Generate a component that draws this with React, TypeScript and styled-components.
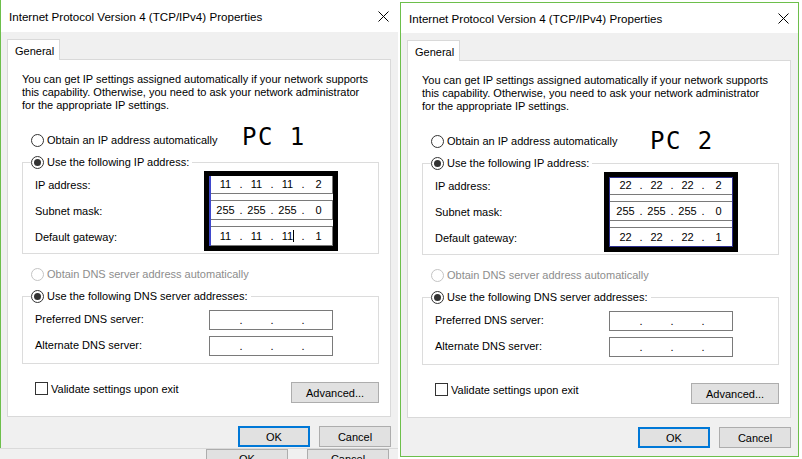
import React from 'react'
import styled, { createGlobalStyle, css } from 'styled-components'

type Ip = [string, string, string, string]

interface DialogProps {
  framed?: boolean
  height: number
  titleHeight: number
  pc: string
  pcShift: { x: number; y: number }
  ip: Ip
  mask: Ip
  gateway: Ip
  caretOnGateway?: number
  edge: 'left' | 'all'
}

const GlobalStyle = createGlobalStyle`
  html, body {
    margin: 0;
    padding: 0;
    background: #fff;
  }
  body {
    font-family: "Liberation Sans", Arial, sans-serif;
    font-size: 11px;
    color: #000;
  }
`

const Screen = styled.div`
  display: flex;
  align-items: flex-start;
  gap: 2px;
  width: 802px;
  height: 459px;
  overflow: hidden;
  background: #fff;
`
const LeftColumn = styled.div`
  display: flex;
  flex-direction: column;
  width: 398px;
`
const Window = styled.div<{ $framed?: boolean; $height: number }>`
  box-sizing: border-box;
  display: flex;
  flex-direction: column;
  width: ${({ $framed }) => ($framed ? 399 : 398)}px;
  height: ${({ $height }) => $height}px;
  margin-top: ${({ $framed }) => ($framed ? 2 : 0)}px;
  background: #f0f0f0;
  border: 1px solid #6dbf4b;
  ${({ $framed }) =>
    !$framed &&
    css`
      border-width: 0 0 0 1px;
    `}
`
const TitleBar = styled.div<{ $height: number }>`
  display: flex;
  align-items: center;
  height: ${({ $height }) => $height}px;
  padding: 0 9px 0 8px;
  background: #fff;
  font-size: 11.6px;
`
const CloseIcon = styled.svg`
  margin-left: auto;
  width: 11px;
  height: 11px;
`
const Body = styled.div`
  flex: 1;
  display: flex;
  flex-direction: column;
  padding: 7px 7px 0 6px;
`
const Tab = styled.div`
  position: relative;
  z-index: 1;
  align-self: flex-start;
  box-sizing: border-box;
  width: 53px;
  height: 21px;
  margin-bottom: -1px;
  padding: 3px 0 0 7px;
  background: #fff;
  border: 1px solid #d9d9d9;
  border-bottom: none;
  line-height: 16px;
`
const Panel = styled.div`
  display: flex;
  flex-direction: column;
  padding: 13px 11px 13px 14px;
  background: #fff;
  border: 1px solid #d9d9d9;
`
const Description = styled.p`
  margin: 0;
  line-height: 13px;
`
const RadioRow = styled.div<{ $disabled?: boolean; $top?: number }>`
  position: relative;
  display: flex;
  align-items: center;
  gap: 3px;
  height: 16px;
  padding-left: 9px;
  margin-top: ${({ $top }) => $top ?? 0}px;
  line-height: 16px;
  color: ${({ $disabled }) => ($disabled ? '#8d8d8d' : '#000')};
`
const Legend = styled(RadioRow)`
  align-self: flex-start;
  margin: -9px 0 0 8px;
  padding: 0 3px 0 0;
  background: #fff;
`
const Radio = styled.span<{ $checked?: boolean; $disabled?: boolean }>`
  box-sizing: border-box;
  display: flex;
  align-items: center;
  justify-content: center;
  width: 13px;
  height: 13px;
  border-radius: 50%;
  border: 1px solid ${({ $disabled }) => ($disabled ? '#c4c4c4' : '#333')};
  background: #fff;
  &::after {
    content: '';
    display: ${({ $checked }) => ($checked ? 'block' : 'none')};
    width: 7px;
    height: 7px;
    border-radius: 50%;
    background: #333;
  }
`
const PcTag = styled.span`
  position: absolute;
  font-family: "DejaVu Sans Mono", "Liberation Mono", monospace;
  font-size: 24px;
  line-height: 24px;
  letter-spacing: 1.5px;
  color: #000;
  white-space: pre;
`
const Group = styled.div`
  display: flex;
  flex-direction: column;
  margin-top: 14px;
  border: 1px solid #dcdcdc;
`
const GroupBody = styled.div`
  display: flex;
  margin-top: 1px;
  padding: 0 0 2px 12px;
`
const LabelColumn = styled.div`
  display: flex;
  flex-direction: column;
  width: 169px;
  padding-top: 1px;
`
const FieldLabel = styled.div`
  height: 26px;
  line-height: 26px;
`
const FieldStack = styled.div<{ $boxed?: boolean; $edge?: 'left' | 'all' }>`
  position: relative;
  display: flex;
  flex-direction: column;
  gap: 6px;
  width: 124px;
  overflow: hidden;
  background: #fff;
  border: 5px solid ${({ $boxed }) => ($boxed ? '#000' : 'transparent')};
  ${({ $boxed }) =>
    !$boxed &&
    css`
      background: transparent;
    `}
  ${({ $boxed }) =>
    $boxed &&
    css`
      & > div:first-child {
        margin-top: -2px;
      }
    `}
  ${({ $boxed, $edge }) =>
    $boxed &&
    $edge === 'left' &&
    css`
      &::after {
        content: '';
        position: absolute;
        left: 0;
        top: 0;
        bottom: 0;
        width: 2px;
        background: #3f47cc;
      }
    `}
  ${({ $boxed, $edge }) =>
    $boxed &&
    $edge === 'all' &&
    css`
      &::after {
        content: '';
        position: absolute;
        inset: 0;
        border: 1px solid #2e2f8f;
      }
    `}
`
const IpBox = styled.div`
  box-sizing: border-box;
  display: flex;
  height: 20px;
  padding-left: 4px;
  background: #fff;
  border: 1px solid #7a7a7a;
  line-height: 18px;
`
const Segment = styled.span`
  width: 23px;
  text-align: center;
  white-space: nowrap;
`
const Dot = styled.span`
  width: 8px;
  text-align: center;
`
const Caret = styled.span`
  display: inline-block;
  width: 1px;
  height: 12px;
  margin-right: -1px;
  vertical-align: -2px;
  background: #000;
`
const OptionsRow = styled.div`
  display: flex;
  align-items: flex-start;
  justify-content: space-between;
  margin-top: 18px;
  padding-left: 13px;
`
const CheckRow = styled.label`
  display: flex;
  align-items: center;
  gap: 3px;
  height: 13px;
`
const CheckBox = styled.span`
  box-sizing: border-box;
  width: 13px;
  height: 13px;
  border: 1px solid #333;
  background: #fff;
`
const Button = styled.div<{ $default?: boolean; $width: number }>`
  box-sizing: border-box;
  display: flex;
  align-items: center;
  justify-content: center;
  width: ${({ $width }) => $width}px;
  height: 21px;
  background: #e1e1e1;
  border: ${({ $default }) => ($default ? '2px solid #0078d7' : '1px solid #adadad')};
`
const Footer = styled.div`
  display: flex;
  justify-content: flex-end;
  gap: 9px;
  margin-top: 9px;
`
const BehindStrip = styled.div`
  display: flex;
  align-items: flex-start;
  height: 11px;
  padding-left: 206px;
  background: #f0f0f0;
  border-top: 1px solid #dadada;
  overflow: hidden;
`
const BehindButton = styled.div<{ $gap: number }>`
  box-sizing: border-box;
  width: 82px;
  height: 21px;
  margin-left: ${({ $gap }) => $gap}px;
  padding-top: 3px;
  text-align: center;
  background: #e1e1e1;
  border: 1px solid #adadad;
`

const IpField = ({ value, caretAt }: { value: Ip; caretAt?: number }) => (
  <IpBox>
    {value.map((seg, i) => (
      <React.Fragment key={i}>
        {i > 0 && <Dot>.</Dot>}
        <Segment>
          {seg}
          {caretAt === i && <Caret />}
        </Segment>
      </React.Fragment>
    ))}
  </IpBox>
)

const empty: Ip = ['', '', '', '']

const Dialog = (p: DialogProps) => (
  <Window $framed={p.framed} $height={p.height}>
    <TitleBar $height={p.titleHeight}>
      Internet Protocol Version 4 (TCP/IPv4) Properties
      <CloseIcon viewBox="0 0 11 11">
        <path d="M0.5 0.5 L10.5 10.5 M10.5 0.5 L0.5 10.5" stroke="#000" strokeWidth="1" />
      </CloseIcon>
    </TitleBar>
    <Body>
      <Tab>General</Tab>
      <Panel>
        <Description>
          You can get IP settings assigned automatically if your network supports
          <br />
          this capability. Otherwise, you need to ask your network administrator
          <br />
          for the appropriate IP settings.
        </Description>
        <RadioRow $top={20}>
          <Radio />
          Obtain an IP address automatically
          <PcTag style={{ left: 220 + p.pcShift.x, top: -7 + p.pcShift.y }}>{p.pc}</PcTag>
        </RadioRow>
        <Group>
          <Legend>
            <Radio $checked />
            Use the following IP address:
          </Legend>
          <GroupBody>
            <LabelColumn>
              <FieldLabel>IP address:</FieldLabel>
              <FieldLabel>Subnet mask:</FieldLabel>
              <FieldLabel>Default gateway:</FieldLabel>
            </LabelColumn>
            <FieldStack $boxed $edge={p.edge}>
              <IpField value={p.ip} />
              <IpField value={p.mask} />
              <IpField value={p.gateway} caretAt={p.caretOnGateway} />
            </FieldStack>
          </GroupBody>
        </Group>
        <RadioRow $top={12} $disabled>
          <Radio $disabled />
          Obtain DNS server address automatically
        </RadioRow>
        <Group>
          <Legend>
            <Radio $checked />
            Use the following DNS server addresses:
          </Legend>
          <GroupBody>
            <LabelColumn>
              <FieldLabel>Preferred DNS server:</FieldLabel>
              <FieldLabel>Alternate DNS server:</FieldLabel>
            </LabelColumn>
            <FieldStack>
              <IpField value={empty} />
              <IpField value={empty} />
            </FieldStack>
          </GroupBody>
        </Group>
        <OptionsRow>
          <CheckRow>
            <CheckBox />
            Validate settings upon exit
          </CheckRow>
          <Button $width={88}>Advanced...</Button>
        </OptionsRow>
      </Panel>
      <Footer>
        <Button $default $width={72}>OK</Button>
        <Button $width={72}>Cancel</Button>
      </Footer>
    </Body>
  </Window>
)

export default function App() {
  return (
    <>
      <GlobalStyle />
      <Screen>
        <LeftColumn>
          <Dialog
            height={448}
            titleHeight={32}
            pc="PC 1"
            pcShift={{ x: 0, y: 0 }}
            ip={['11', '11', '11', '2']}
            mask={['255', '255', '255', '0']}
            gateway={['11', '11', '11', '1']}
            caretOnGateway={2}
            edge="left"
          />
          <BehindStrip>
            <BehindButton $gap={0}>OK</BehindButton>
            <BehindButton $gap={19}>Cancel</BehindButton>
          </BehindStrip>
        </LeftColumn>
        <Dialog
          framed
          height={455}
          titleHeight={30}
          pc="PC 2"
          pcShift={{ x: 8, y: 3 }}
          ip={['22', '22', '22', '2']}
          mask={['255', '255', '255', '0']}
          gateway={['22', '22', '22', '1']}
          edge="all"
        />
      </Screen>
    </>
  )
}
